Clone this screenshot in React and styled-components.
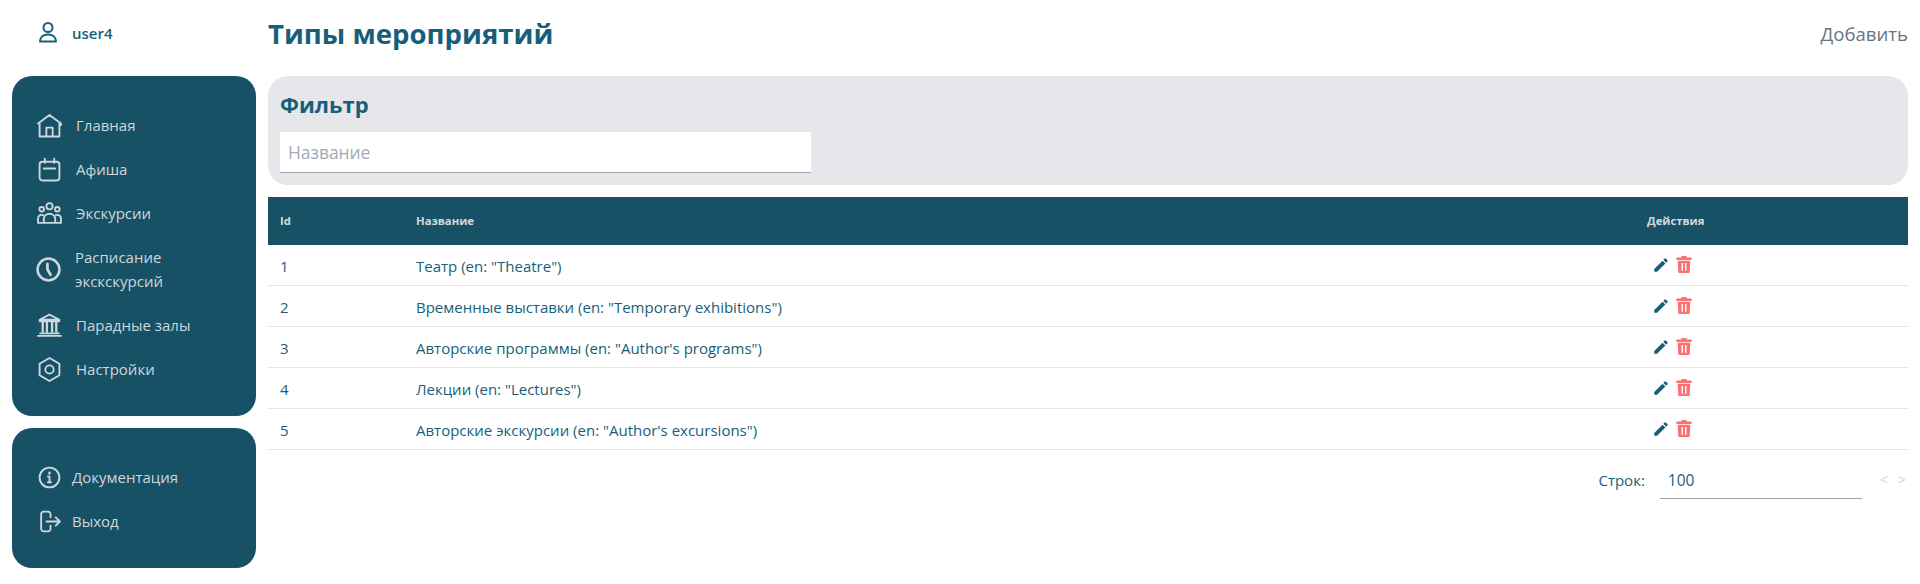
import React from "react";
import styled, { createGlobalStyle } from "styled-components";
import { MdEdit } from "react-icons/md";

const Global = createGlobalStyle`
  html, body { margin: 0; padding: 0; background: #fff; }
  body { font-family: "Open Sans", "Noto Sans", "Liberation Sans", sans-serif; color: #175166; }
  * { box-sizing: border-box; }
`;

const Page = styled.div`
  display: flex; gap: 12px; padding: 0 12px; width: 1920px; height: 584px; overflow: hidden;
`;
const Side = styled.aside`
  width: 244px; flex: none; display: flex; flex-direction: column;
`;
const UserRow = styled.div`
  height: 76px; display: flex; align-items: flex-start; padding: 20px 0 0 24px; gap: 12px;
  font-size: 15px; font-weight: 600; color: #175f78; line-height: 26px;
  & > svg { stroke-width: 2; }
`;
const Card = styled.nav`
  background: #175166; border-radius: 20px; color: #cfd6dc;
  padding-top: 27px; height: ${p => p.$h}px; margin-bottom: 12px;
  display: flex; flex-direction: column;
`;
const Item = styled.div`
  display: flex; align-items: center; gap: ${p => p.$gap || 14}px; min-height: 44px;
  font-size: 15px; line-height: 24.5px;
  padding-left: 25px;
  & > svg { flex: none; width: 25px; height: 25px; stroke-width: 1.8; }
`;
const Tall = styled(Item)`
  min-height: 68px; gap: 14px; padding-left: 24px;
`;
const Main = styled.main`
  flex: 1; min-width: 0; display: flex; flex-direction: column;
`;
const Head = styled.header`
  height: 76px; display: flex; justify-content: space-between; align-items: flex-start; padding-top: 14px;
`;
const Title = styled.h1`
  margin: 0; font-size: 27.6px; line-height: 38px; font-weight: 700; color: #175f78;
`;
const Add = styled.div`
  font-size: 18.6px; line-height: 40px; color: #6b7280;
`;
const Filter = styled.section`
  height: 109px; background: #e5e7eb; border-radius: 20px; padding: 12px;
`;
const FilterTitle = styled.h2`
  margin: 0 0 12px; font-size: 22px; line-height: 32px; font-weight: 700; color: #175f78;
`;
const Field = styled.div`
  width: 531px; height: 41px; background: #fff; border-bottom: 1px solid #9ca3af;
  padding-left: 8px; font-size: 17.4px; line-height: 40px; color: #a3a9b5;
`;
const Table = styled.table`
  width: 100%; margin-top: 12px; border-collapse: separate; border-spacing: 0; table-layout: fixed;
`;
const Th = styled.th`
  background: #175166; color: #d5dade; height: 48px; padding: 0 12px 1px; text-align: left;
  font-size: 11.3px; font-weight: 700; width: ${p => p.$w ? p.$w + "px" : "auto"};
`;
const Td = styled.td`
  height: 41px; padding: 2px 12px 0; font-size: 15px; color: #175f78; border-bottom: 1px solid #e5e7eb;
`;
const Actions = styled.div`
  display: flex; align-items: center; gap: 6px; padding-left: 5px; margin-top: -3px;
`;
const Pager = styled.div`
  display: flex; justify-content: flex-end; align-items: flex-start; padding-top: 18px;
  font-size: 15px; color: #175f78; line-height: 24px;
`;
const PagerSelect = styled.div`
  width: 202px; height: 31px; margin-left: 15px; padding-left: 8px; border-bottom: 1px solid #9ca3af;
  font-size: 15.5px;
`;
const Arrows = styled.div`
  display: flex; gap: 9px; margin-left: 18px; padding-right: 2px; color: #d1d5db; font-size: 15px; margin-top: -1px;
`;

const S = { fill: "none", stroke: "currentColor", strokeWidth: 2, strokeLinecap: "round", strokeLinejoin: "round" };
const Icon = ({ children, size }) => <svg viewBox="0 0 24 24" width={size} height={size} {...S}>{children}</svg>;

const Trash = () => (
  <svg viewBox="0 0 16 18" width="16" height="17" fill="#fb7171" aria-hidden>
    <path fillRule="evenodd" d="M5.500 0h5l.6 1.600H16V4.200H0V1.600h4.900zM1.300 5h13.400l-.6 12a1 1 0 0 1-1 1H2.900a1 1 0 0 1-1-1zM5.400 7.500v8h1.500v-8zm3.700 0v8h1.500v-8z" />
  </svg>
);

const rows = [
  [1, 'Театр (en: "Theatre")'],
  [2, 'Временные выставки (en: "Temporary exhibitions")'],
  [3, 'Авторские программы (en: "Author\'s programs")'],
  [4, 'Лекции (en: "Lectures")'],
  [5, 'Авторские экскурсии (en: "Author\'s excursions")'],
];

export default function App() {
  return (
    <Page>
      <Global />
      <Side>
        <UserRow>
          <Icon size={24}><circle cx="12" cy="7.500" r="4.500" /><path d="M4 21.500c0-4.500 3.500-7 8-7s8 2.500 8 7z" /></Icon>
          user4
        </UserRow>
        <Card $h={340}>
          <Item>
            <Icon><path d="M1 10 12 2l11 8v1.500M2.500 10v12.500h19V10M9 22.500V14h6v8.500" /></Icon>Главная
          </Item>
          <Item>
            <Icon><rect x="2.500" y="4.500" width="19" height="18" rx="2.500" /><path d="M7.500 1.500v4M16.500 1.500v4M6.500 11h11" /></Icon>Афиша
          </Item>
          <Item>
            <Icon>
              <circle cx="12" cy="5" r="3" /><circle cx="4.500" cy="8" r="2.200" /><circle cx="19.500" cy="8" r="2.200" />
              <path d="M6.500 21v-3.500c0-7 11-7 11 0V21zM6 13.500c-3-.8-5 1-5 3.500v4h5.500M18 13.500c3-.8 5 1 5 3.500v4h-5.500" />
            </Icon>Экскурсии
          </Item>
          <Tall>
            <Icon>
              <circle cx="12" cy="12" r="10.500" strokeWidth="2.400" /><path d="M11 6.500V12l3 5" strokeWidth="2.600" />
            </Icon>
            <span>Расписание<br />экскскурсий</span>
          </Tall>
          <Item>
            <Icon>
              <path d="M12 1.500 2.500 6.500h19zM2.500 8h19M1 22h22M3 19.500h18" /><path d="M5.500 9v9M9.500 9v9M14.500 9v9M18.500 9v9" strokeWidth="2.200" />
            </Icon>
            Парадные залы
          </Item>
          <Item>
            <Icon><path d="M12 1 21.500 6.500v11L12 23l-9.500-5.500v-11z" /><circle cx="12" cy="12" r="4" /></Icon>Настройки
          </Item>
        </Card>
        <Card $h={140}>
          <Item $gap={10}>
            <Icon><circle cx="12" cy="12" r="9.500" /><path d="M10.500 11H12v5.500M10.500 16.500h3" /><path d="M12 7.500v.5" strokeWidth="2.400" /></Icon>Документация
          </Item>
          <Item $gap={10}>
            <Icon><path d="M13 8V5a2.500 2.500 0 0 0-2.500-2.500h-4A2.500 2.500 0 0 0 4 5v14a2.500 2.500 0 0 0 2.500 2.500h4A2.500 2.500 0 0 0 13 19v-3M9 12h13M18 8l4 4-4 4" /></Icon>Выход
          </Item>
        </Card>
      </Side>
      <Main>
        <Head>
          <Title>Типы мероприятий</Title>
          <Add>Добавить</Add>
        </Head>
        <Filter>
          <FilterTitle>Фильтр</FilterTitle>
          <Field>Название</Field>
        </Filter>
        <Table>
          <thead>
            <tr>
              <Th $w={136}>Id</Th>
              <Th>Название</Th>
              <Th $w={273}>Действия</Th>
            </tr>
          </thead>
          <tbody>
            {rows.map(([id, name]) => (
              <tr key={id}>
                <Td>{id}</Td>
                <Td>{name}</Td>
                <Td>
                  <Actions>
                    <MdEdit size={18} color="#175f78" />
                    <Trash />
                  </Actions>
                </Td>
              </tr>
            ))}
          </tbody>
        </Table>
        <Pager>
          <span>Строк:</span>
          <PagerSelect>100</PagerSelect>
          <Arrows><span>&lt;</span><span>&gt;</span></Arrows>
        </Pager>
      </Main>
    </Page>
  );
}
